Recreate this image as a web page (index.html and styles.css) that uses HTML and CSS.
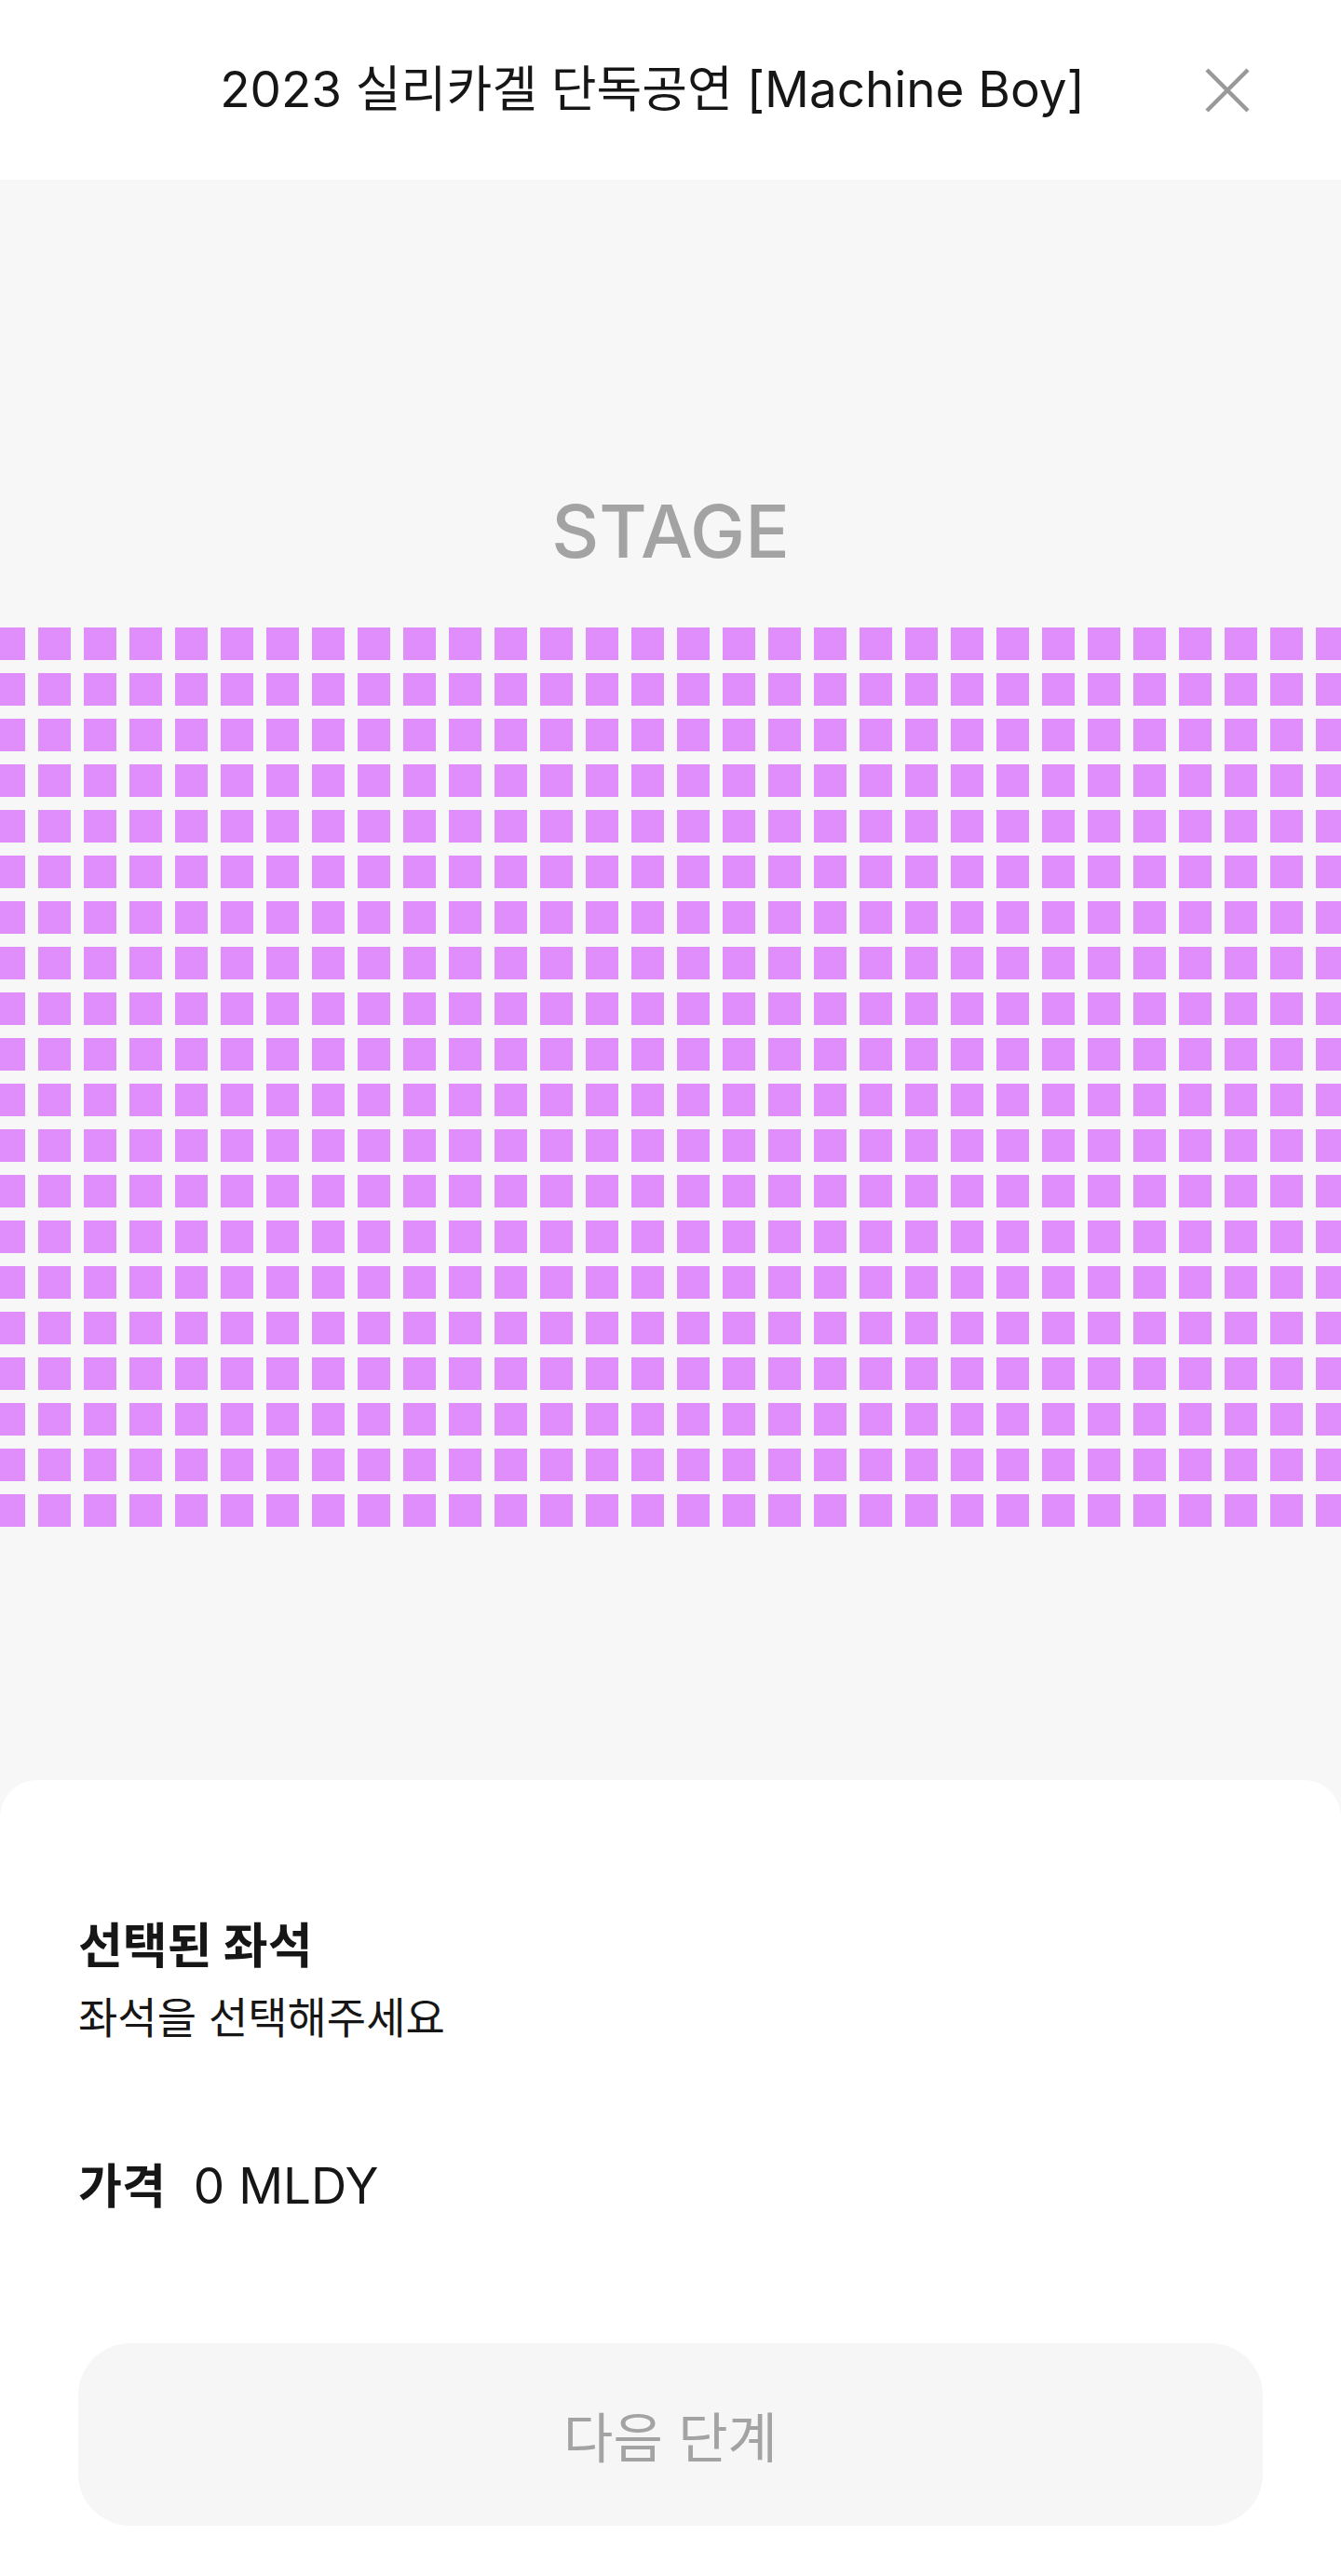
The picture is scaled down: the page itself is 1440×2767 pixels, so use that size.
FILE: index.html
```html
<!DOCTYPE html>
<html lang="ko">
<head>
<meta charset="utf-8">
<title>좌석 선택</title>
<link rel="stylesheet" href="styles.css">
</head>
<body>
<div class="page">
  <header class="topbar">
    <h1 class="title">2023 실리카겔 단독공연 [Machine Boy]</h1>
    <button class="close" type="button" aria-label="닫기">
      <svg viewBox="0 0 48 48" width="48" height="48"><path d="M2 2 L46 46 M46 2 L2 46" stroke="#999999" stroke-width="4.5" fill="none"/></svg>
    </button>
  </header>
  <main class="hall">
    <div class="stage">STAGE</div>
    <div class="seats-wrap">
      <div class="seats">
<span class="seat"></span><span class="seat"></span><span class="seat"></span><span class="seat"></span><span class="seat"></span><span class="seat"></span><span class="seat"></span><span class="seat"></span><span class="seat"></span><span class="seat"></span><span class="seat"></span><span class="seat"></span><span class="seat"></span><span class="seat"></span><span class="seat"></span><span class="seat"></span><span class="seat"></span><span class="seat"></span><span class="seat"></span><span class="seat"></span><span class="seat"></span><span class="seat"></span><span class="seat"></span><span class="seat"></span><span class="seat"></span><span class="seat"></span><span class="seat"></span><span class="seat"></span><span class="seat"></span><span class="seat"></span>
<span class="seat"></span><span class="seat"></span><span class="seat"></span><span class="seat"></span><span class="seat"></span><span class="seat"></span><span class="seat"></span><span class="seat"></span><span class="seat"></span><span class="seat"></span><span class="seat"></span><span class="seat"></span><span class="seat"></span><span class="seat"></span><span class="seat"></span><span class="seat"></span><span class="seat"></span><span class="seat"></span><span class="seat"></span><span class="seat"></span><span class="seat"></span><span class="seat"></span><span class="seat"></span><span class="seat"></span><span class="seat"></span><span class="seat"></span><span class="seat"></span><span class="seat"></span><span class="seat"></span><span class="seat"></span>
<span class="seat"></span><span class="seat"></span><span class="seat"></span><span class="seat"></span><span class="seat"></span><span class="seat"></span><span class="seat"></span><span class="seat"></span><span class="seat"></span><span class="seat"></span><span class="seat"></span><span class="seat"></span><span class="seat"></span><span class="seat"></span><span class="seat"></span><span class="seat"></span><span class="seat"></span><span class="seat"></span><span class="seat"></span><span class="seat"></span><span class="seat"></span><span class="seat"></span><span class="seat"></span><span class="seat"></span><span class="seat"></span><span class="seat"></span><span class="seat"></span><span class="seat"></span><span class="seat"></span><span class="seat"></span>
<span class="seat"></span><span class="seat"></span><span class="seat"></span><span class="seat"></span><span class="seat"></span><span class="seat"></span><span class="seat"></span><span class="seat"></span><span class="seat"></span><span class="seat"></span><span class="seat"></span><span class="seat"></span><span class="seat"></span><span class="seat"></span><span class="seat"></span><span class="seat"></span><span class="seat"></span><span class="seat"></span><span class="seat"></span><span class="seat"></span><span class="seat"></span><span class="seat"></span><span class="seat"></span><span class="seat"></span><span class="seat"></span><span class="seat"></span><span class="seat"></span><span class="seat"></span><span class="seat"></span><span class="seat"></span>
<span class="seat"></span><span class="seat"></span><span class="seat"></span><span class="seat"></span><span class="seat"></span><span class="seat"></span><span class="seat"></span><span class="seat"></span><span class="seat"></span><span class="seat"></span><span class="seat"></span><span class="seat"></span><span class="seat"></span><span class="seat"></span><span class="seat"></span><span class="seat"></span><span class="seat"></span><span class="seat"></span><span class="seat"></span><span class="seat"></span><span class="seat"></span><span class="seat"></span><span class="seat"></span><span class="seat"></span><span class="seat"></span><span class="seat"></span><span class="seat"></span><span class="seat"></span><span class="seat"></span><span class="seat"></span>
<span class="seat"></span><span class="seat"></span><span class="seat"></span><span class="seat"></span><span class="seat"></span><span class="seat"></span><span class="seat"></span><span class="seat"></span><span class="seat"></span><span class="seat"></span><span class="seat"></span><span class="seat"></span><span class="seat"></span><span class="seat"></span><span class="seat"></span><span class="seat"></span><span class="seat"></span><span class="seat"></span><span class="seat"></span><span class="seat"></span><span class="seat"></span><span class="seat"></span><span class="seat"></span><span class="seat"></span><span class="seat"></span><span class="seat"></span><span class="seat"></span><span class="seat"></span><span class="seat"></span><span class="seat"></span>
<span class="seat"></span><span class="seat"></span><span class="seat"></span><span class="seat"></span><span class="seat"></span><span class="seat"></span><span class="seat"></span><span class="seat"></span><span class="seat"></span><span class="seat"></span><span class="seat"></span><span class="seat"></span><span class="seat"></span><span class="seat"></span><span class="seat"></span><span class="seat"></span><span class="seat"></span><span class="seat"></span><span class="seat"></span><span class="seat"></span><span class="seat"></span><span class="seat"></span><span class="seat"></span><span class="seat"></span><span class="seat"></span><span class="seat"></span><span class="seat"></span><span class="seat"></span><span class="seat"></span><span class="seat"></span>
<span class="seat"></span><span class="seat"></span><span class="seat"></span><span class="seat"></span><span class="seat"></span><span class="seat"></span><span class="seat"></span><span class="seat"></span><span class="seat"></span><span class="seat"></span><span class="seat"></span><span class="seat"></span><span class="seat"></span><span class="seat"></span><span class="seat"></span><span class="seat"></span><span class="seat"></span><span class="seat"></span><span class="seat"></span><span class="seat"></span><span class="seat"></span><span class="seat"></span><span class="seat"></span><span class="seat"></span><span class="seat"></span><span class="seat"></span><span class="seat"></span><span class="seat"></span><span class="seat"></span><span class="seat"></span>
<span class="seat"></span><span class="seat"></span><span class="seat"></span><span class="seat"></span><span class="seat"></span><span class="seat"></span><span class="seat"></span><span class="seat"></span><span class="seat"></span><span class="seat"></span><span class="seat"></span><span class="seat"></span><span class="seat"></span><span class="seat"></span><span class="seat"></span><span class="seat"></span><span class="seat"></span><span class="seat"></span><span class="seat"></span><span class="seat"></span><span class="seat"></span><span class="seat"></span><span class="seat"></span><span class="seat"></span><span class="seat"></span><span class="seat"></span><span class="seat"></span><span class="seat"></span><span class="seat"></span><span class="seat"></span>
<span class="seat"></span><span class="seat"></span><span class="seat"></span><span class="seat"></span><span class="seat"></span><span class="seat"></span><span class="seat"></span><span class="seat"></span><span class="seat"></span><span class="seat"></span><span class="seat"></span><span class="seat"></span><span class="seat"></span><span class="seat"></span><span class="seat"></span><span class="seat"></span><span class="seat"></span><span class="seat"></span><span class="seat"></span><span class="seat"></span><span class="seat"></span><span class="seat"></span><span class="seat"></span><span class="seat"></span><span class="seat"></span><span class="seat"></span><span class="seat"></span><span class="seat"></span><span class="seat"></span><span class="seat"></span>
<span class="seat"></span><span class="seat"></span><span class="seat"></span><span class="seat"></span><span class="seat"></span><span class="seat"></span><span class="seat"></span><span class="seat"></span><span class="seat"></span><span class="seat"></span><span class="seat"></span><span class="seat"></span><span class="seat"></span><span class="seat"></span><span class="seat"></span><span class="seat"></span><span class="seat"></span><span class="seat"></span><span class="seat"></span><span class="seat"></span><span class="seat"></span><span class="seat"></span><span class="seat"></span><span class="seat"></span><span class="seat"></span><span class="seat"></span><span class="seat"></span><span class="seat"></span><span class="seat"></span><span class="seat"></span>
<span class="seat"></span><span class="seat"></span><span class="seat"></span><span class="seat"></span><span class="seat"></span><span class="seat"></span><span class="seat"></span><span class="seat"></span><span class="seat"></span><span class="seat"></span><span class="seat"></span><span class="seat"></span><span class="seat"></span><span class="seat"></span><span class="seat"></span><span class="seat"></span><span class="seat"></span><span class="seat"></span><span class="seat"></span><span class="seat"></span><span class="seat"></span><span class="seat"></span><span class="seat"></span><span class="seat"></span><span class="seat"></span><span class="seat"></span><span class="seat"></span><span class="seat"></span><span class="seat"></span><span class="seat"></span>
<span class="seat"></span><span class="seat"></span><span class="seat"></span><span class="seat"></span><span class="seat"></span><span class="seat"></span><span class="seat"></span><span class="seat"></span><span class="seat"></span><span class="seat"></span><span class="seat"></span><span class="seat"></span><span class="seat"></span><span class="seat"></span><span class="seat"></span><span class="seat"></span><span class="seat"></span><span class="seat"></span><span class="seat"></span><span class="seat"></span><span class="seat"></span><span class="seat"></span><span class="seat"></span><span class="seat"></span><span class="seat"></span><span class="seat"></span><span class="seat"></span><span class="seat"></span><span class="seat"></span><span class="seat"></span>
<span class="seat"></span><span class="seat"></span><span class="seat"></span><span class="seat"></span><span class="seat"></span><span class="seat"></span><span class="seat"></span><span class="seat"></span><span class="seat"></span><span class="seat"></span><span class="seat"></span><span class="seat"></span><span class="seat"></span><span class="seat"></span><span class="seat"></span><span class="seat"></span><span class="seat"></span><span class="seat"></span><span class="seat"></span><span class="seat"></span><span class="seat"></span><span class="seat"></span><span class="seat"></span><span class="seat"></span><span class="seat"></span><span class="seat"></span><span class="seat"></span><span class="seat"></span><span class="seat"></span><span class="seat"></span>
<span class="seat"></span><span class="seat"></span><span class="seat"></span><span class="seat"></span><span class="seat"></span><span class="seat"></span><span class="seat"></span><span class="seat"></span><span class="seat"></span><span class="seat"></span><span class="seat"></span><span class="seat"></span><span class="seat"></span><span class="seat"></span><span class="seat"></span><span class="seat"></span><span class="seat"></span><span class="seat"></span><span class="seat"></span><span class="seat"></span><span class="seat"></span><span class="seat"></span><span class="seat"></span><span class="seat"></span><span class="seat"></span><span class="seat"></span><span class="seat"></span><span class="seat"></span><span class="seat"></span><span class="seat"></span>
<span class="seat"></span><span class="seat"></span><span class="seat"></span><span class="seat"></span><span class="seat"></span><span class="seat"></span><span class="seat"></span><span class="seat"></span><span class="seat"></span><span class="seat"></span><span class="seat"></span><span class="seat"></span><span class="seat"></span><span class="seat"></span><span class="seat"></span><span class="seat"></span><span class="seat"></span><span class="seat"></span><span class="seat"></span><span class="seat"></span><span class="seat"></span><span class="seat"></span><span class="seat"></span><span class="seat"></span><span class="seat"></span><span class="seat"></span><span class="seat"></span><span class="seat"></span><span class="seat"></span><span class="seat"></span>
<span class="seat"></span><span class="seat"></span><span class="seat"></span><span class="seat"></span><span class="seat"></span><span class="seat"></span><span class="seat"></span><span class="seat"></span><span class="seat"></span><span class="seat"></span><span class="seat"></span><span class="seat"></span><span class="seat"></span><span class="seat"></span><span class="seat"></span><span class="seat"></span><span class="seat"></span><span class="seat"></span><span class="seat"></span><span class="seat"></span><span class="seat"></span><span class="seat"></span><span class="seat"></span><span class="seat"></span><span class="seat"></span><span class="seat"></span><span class="seat"></span><span class="seat"></span><span class="seat"></span><span class="seat"></span>
<span class="seat"></span><span class="seat"></span><span class="seat"></span><span class="seat"></span><span class="seat"></span><span class="seat"></span><span class="seat"></span><span class="seat"></span><span class="seat"></span><span class="seat"></span><span class="seat"></span><span class="seat"></span><span class="seat"></span><span class="seat"></span><span class="seat"></span><span class="seat"></span><span class="seat"></span><span class="seat"></span><span class="seat"></span><span class="seat"></span><span class="seat"></span><span class="seat"></span><span class="seat"></span><span class="seat"></span><span class="seat"></span><span class="seat"></span><span class="seat"></span><span class="seat"></span><span class="seat"></span><span class="seat"></span>
<span class="seat"></span><span class="seat"></span><span class="seat"></span><span class="seat"></span><span class="seat"></span><span class="seat"></span><span class="seat"></span><span class="seat"></span><span class="seat"></span><span class="seat"></span><span class="seat"></span><span class="seat"></span><span class="seat"></span><span class="seat"></span><span class="seat"></span><span class="seat"></span><span class="seat"></span><span class="seat"></span><span class="seat"></span><span class="seat"></span><span class="seat"></span><span class="seat"></span><span class="seat"></span><span class="seat"></span><span class="seat"></span><span class="seat"></span><span class="seat"></span><span class="seat"></span><span class="seat"></span><span class="seat"></span>
<span class="seat"></span><span class="seat"></span><span class="seat"></span><span class="seat"></span><span class="seat"></span><span class="seat"></span><span class="seat"></span><span class="seat"></span><span class="seat"></span><span class="seat"></span><span class="seat"></span><span class="seat"></span><span class="seat"></span><span class="seat"></span><span class="seat"></span><span class="seat"></span><span class="seat"></span><span class="seat"></span><span class="seat"></span><span class="seat"></span><span class="seat"></span><span class="seat"></span><span class="seat"></span><span class="seat"></span><span class="seat"></span><span class="seat"></span><span class="seat"></span><span class="seat"></span><span class="seat"></span><span class="seat"></span>
      </div>
    </div>
    <section class="sheet">
      <div class="selected">
        <h2 class="sel-title">선택된 좌석</h2>
        <p class="sel-desc">좌석을 선택해주세요</p>
      </div>
      <div class="price">
        <span class="price-label">가격</span>
        <span class="price-value">0 MLDY</span>
      </div>
      <button class="next" type="button" disabled>다음 단계</button>
    </section>
  </main>
</div>
</body>
</html>
```

FILE: styles.css
```css
* { box-sizing: border-box; }

html, body {
  margin: 0;
  padding: 0;
  background: #ffffff;
}

body {
  font-family: Inter, "Noto Sans CJK KR", "Noto Sans", sans-serif;
  color: #1a1a1a;
}

.page {
  width: 1440px;
  height: 2767px;
  overflow: hidden;
  display: flex;
  flex-direction: column;
}

.topbar {
  height: 193px;
  flex: none;
  display: flex;
  align-items: center;
  gap: 24px;
  padding: 0 98px 0 131px;
  background: #ffffff;
}

.title {
  flex: 1;
  margin: 0;
  text-align: center;
  font-size: 53px;
  font-weight: 400;
  line-height: 1;
  color: #161616;
  white-space: nowrap;
}

.close {
  flex: none;
  width: 48px;
  height: 48px;
  padding: 0;
  border: 0;
  background: none;
  display: block;
}
.close svg { display: block; }

.hall {
  flex: 1;
  display: flex;
  flex-direction: column;
  background: #f7f7f7;
}

.stage {
  margin-top: 338px;
  text-align: center;
  font-size: 79px;
  font-weight: 500;
  line-height: 1;
  color: #a3a3a3;
}

.seats-wrap {
  margin-top: 64px;
  display: flex;
  justify-content: center;
  overflow: hidden;
}

.seats {
  flex: none;
  display: grid;
  grid-template-columns: repeat(30, 35px);
  grid-auto-rows: 35px;
  gap: 14px;
}

.seat {
  display: block;
  background: #df8efb;
}

.sheet {
  margin-top: auto;
  height: 855px;
  background: #ffffff;
  border-radius: 40px 40px 0 0;
  padding: 148px 84px 54px;
  display: flex;
  flex-direction: column;
}

.sel-title {
  margin: 0;
  font-size: 52px;
  font-weight: 700;
  line-height: 1.2;
  color: #161616;
}

.sel-desc {
  margin: 18px 0 0;
  font-size: 46px;
  font-weight: 400;
  line-height: 1.2;
  color: #161616;
}

.price {
  margin-top: 112px;
  display: flex;
  align-items: baseline;
  gap: 30px;
}

.price-label {
  font-size: 51px;
  font-weight: 700;
  color: #161616;
}

.price-value {
  font-size: 53px;
  font-weight: 400;
  color: #161616;
}

.next {
  margin-top: auto;
  height: 196px;
  width: 100%;
  border: 0;
  border-radius: 56px;
  background: #f6f6f6;
  font-family: Inter, "Noto Sans CJK KR", sans-serif;
  font-size: 58px;
  font-weight: 400;
  color: #a3a3a3;
}
```
